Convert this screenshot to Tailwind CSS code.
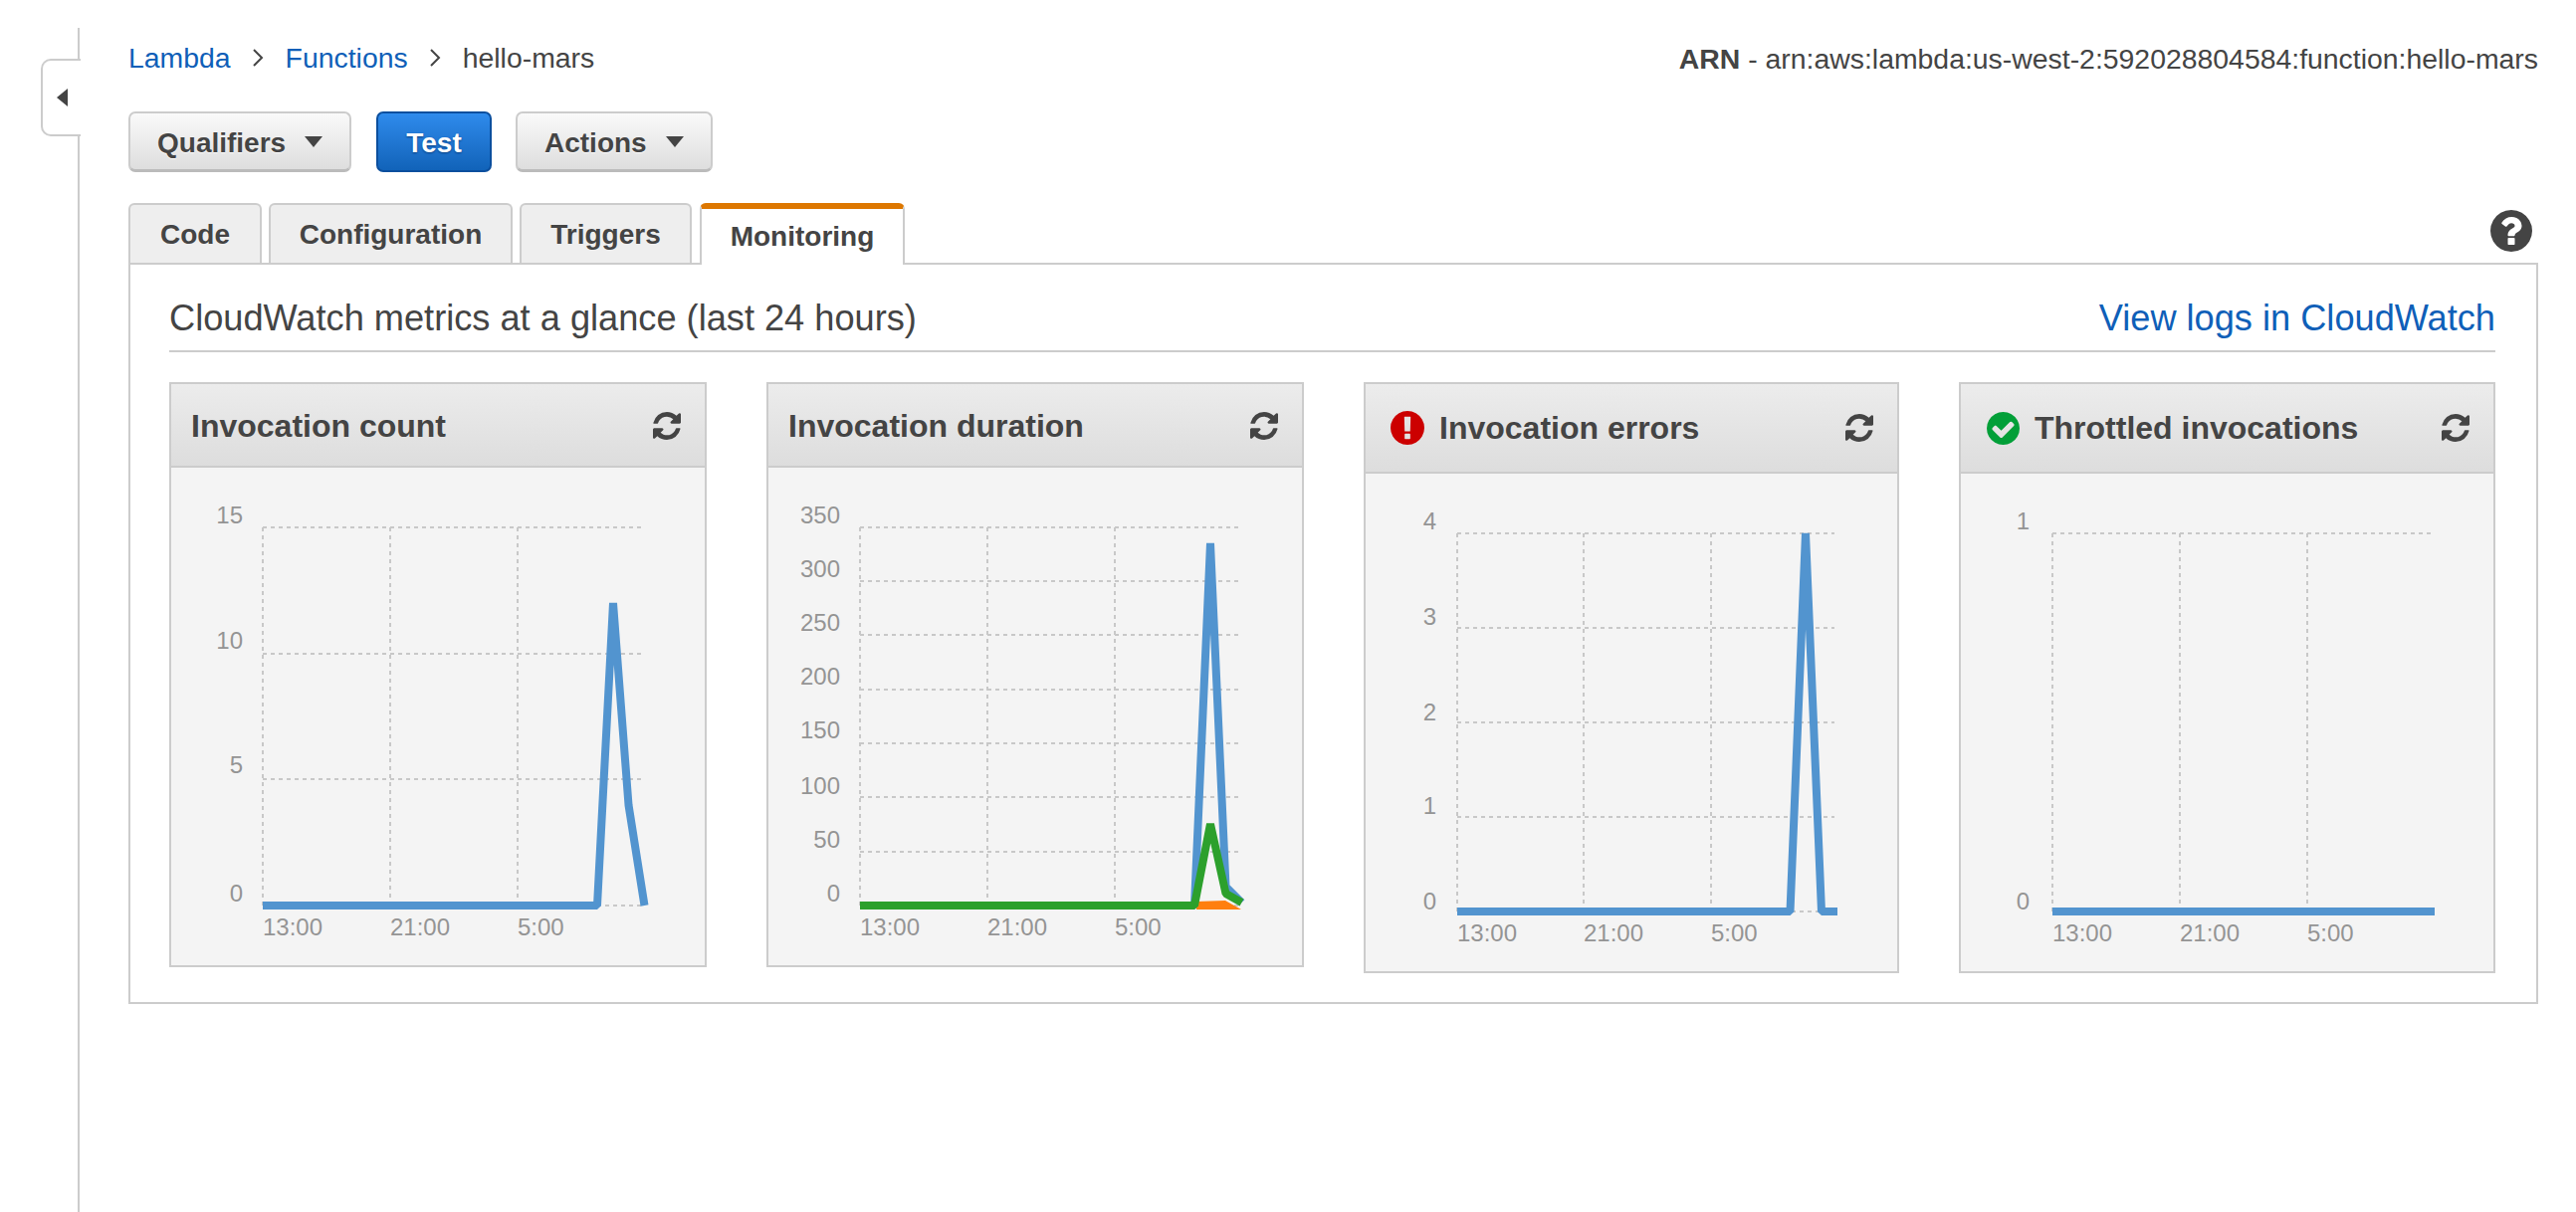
<!DOCTYPE html>
<html lang="en">
<head>
  <meta charset="UTF-8" />
  <title>hello-mars - Lambda</title>
  <script src="https://cdn.jsdelivr.net/npm/@tailwindcss/browser@4"></script>
</head>
<body class="bg-white text-[#444] font-['Liberation_Sans',Arial,sans-serif] min-h-screen flex">
  <!-- Sidebar rail with collapse toggle -->
  <aside class="relative w-[80px] shrink-0 mt-[28px] border-r-2 border-[#ccc]">
    <button class="absolute left-[41px] top-[31px] w-[40px] h-[78px] bg-white border-2 border-r-0 border-[#ccc] rounded-l-[10px] flex items-center pl-[14px]">
      <svg width="11" height="18" viewBox="0 0 11 18"><path d="M11 0v18L0 9z" fill="#444"/></svg>
    </button>
  </aside>

  <main class="flex-1 ml-[49px] mr-[38px] pt-[40px]">
    <!-- Breadcrumb and ARN -->
    <div class="flex items-center justify-between h-[36px] text-[28.4px]">
      <nav class="flex items-center">
        <a class="text-[#0f5fb8]">Lambda</a>
        <svg class="mx-[21.5px]" width="12" height="20" viewBox="0 0 12 20"><path d="M2 2l8 8-8 8" fill="none" stroke="#444" stroke-width="2"/></svg>
        <a class="text-[#0f5fb8]">Functions</a>
        <svg class="mx-[21.5px]" width="12" height="20" viewBox="0 0 12 20"><path d="M2 2l8 8-8 8" fill="none" stroke="#444" stroke-width="2"/></svg>
        <span>hello-mars</span>
      </nav>
      <div class="mt-[2px]"><b>ARN</b> - arn:aws:lambda:us-west-2:592028804584:function:hello-mars</div>
    </div>

    <!-- Action buttons -->
    <div class="flex gap-[25px] mt-[36px] text-[28px] font-bold">
      <button class="w-[224px] h-[61px] pl-[27px] pt-[3px] flex items-center rounded-[7px] border-2 border-[#ccc] border-b-[3px] border-b-[#bbb] bg-gradient-to-b from-[#fafafa] to-[#dedede] [text-shadow:0_1px_0_#fff]">
        Qualifiers
        <svg class="ml-[19px] -mt-[2px]" width="18" height="11" viewBox="0 0 18 11"><path d="M0 0h18L9 11z" fill="#444"/></svg>
      </button>
      <button class="w-[116px] h-[61px] pt-[2px] flex items-center justify-center rounded-[7px] border-2 border-[#0b4f9e] bg-gradient-to-b from-[#2f8bec] to-[#1163b9] text-white [text-shadow:0_1px_2px_#0a3f80]">Test</button>
      <button class="w-[198px] h-[61px] -ml-[1px] pl-[27px] pt-[3px] flex items-center rounded-[7px] border-2 border-[#ccc] border-b-[3px] border-b-[#bbb] bg-gradient-to-b from-[#fafafa] to-[#dedede] [text-shadow:0_1px_0_#fff]">
        Actions
        <svg class="ml-[19px] -mt-[2px]" width="18" height="11" viewBox="0 0 18 11"><path d="M0 0h18L9 11z" fill="#444"/></svg>
      </button>
    </div>

    <!-- Tabs -->
    <div class="flex items-start justify-between mt-[31px] -mb-[2px] relative">
      <div class="flex gap-[7px] text-[28px] font-bold">
        <div class="w-[134px] h-[60px] pt-[2px] flex items-center justify-center bg-[#eee] border-2 border-b-0 border-[#ccc] rounded-t-[6px]">Code</div>
        <div class="w-[245px] h-[60px] pt-[2px] flex items-center justify-center bg-[#eee] border-2 border-b-0 border-[#ccc] rounded-t-[6px]">Configuration</div>
        <div class="w-[173px] h-[60px] pt-[2px] flex items-center justify-center bg-[#eee] border-2 border-b-0 border-[#ccc] rounded-t-[6px]">Triggers</div>
        <div class="relative z-10 ml-[1px] w-[206px] h-[62px] flex items-center justify-center bg-white border-2 border-t-[6px] border-b-0 border-[#ccc] border-t-[#dd7700] rounded-t-[6px]">Monitoring</div>
      </div>
      <svg class="mt-[7px] mr-[6px]" width="42" height="42" viewBox="128 128 1536 1536"><path fill="#444" d="M1024 1376v-192q0-14-9-23t-23-9h-192q-14 0-23 9t-9 23v192q0 14 9 23t23 9h192q14 0 23-9t9-23zm256-672q0-88-55.5-163t-138.5-116-170-41q-243 0-371 213-15 24 8 42l132 100q7 6 19 6 16 0 25-12 53-68 86-92 34-24 86-24 48 0 85.5 26t37.5 59q0 38-20 61t-68 45q-63 28-115.5 86.5t-52.5 125.5v36q0 14 9 23t23 9h192q14 0 23-9t9-23q0-19 21.5-49.5t54.5-49.5q32-18 49-28.5t46-35 44.5-48 28-60.5 12.5-81zm384 192q0 209-103 385.5t-279.5 279.5-385.5 103-385.5-103-279.5-279.5-103-385.5 103-385.5 279.5-279.5 385.5-103 385.5 103 279.5 279.5 103 385.5z"/></svg>
    </div>

    <!-- Monitoring panel -->
    <section class="border-2 border-[#ccc] pl-[39px] pr-[41px] pb-[29px]">
      <div class="flex items-center justify-between pt-[32px] pb-[10px] border-b-2 border-[#ccc] text-[36.2px] leading-[44px]">
        <h2>CloudWatch metrics at a glance (last 24 hours)</h2>
        <a class="text-[#0f5fb8]">View logs in CloudWatch</a>
      </div>

      <div class="flex items-start justify-between mt-[30px]">
        <!-- Invocation count -->
        <div class="w-[540px] border-2 border-[#ccc] bg-[#f4f4f4]">
          <div class="h-[84px] pl-[20px] pr-[24px] flex items-center justify-between border-b-2 border-[#ccc] bg-gradient-to-b from-[#ececec] to-[#ddd]">
            <h3 class="text-[32px] font-bold pt-[2px]">Invocation count</h3>
            <svg class="mt-[1px]" width="28" height="28" viewBox="128 128 1536 1536"><path fill="#444" d="M1639 1056q0 5-1 7-64 268-268 434.5t-478 166.5q-146 0-282.5-55t-243.5-157l-129 129q-19 19-45 19t-45-19-19-45v-448q0-26 19-45t45-19h448q26 0 45 19t19 45-19 45l-137 137q71 66 161 102t187 36q134 0 250-65t186-179q11-17 53-117 8-23 30-23h192q13 0 22.5 9.5t9.5 22.5zm25-800v448q0 26-19 45t-45 19h-448q-26 0-45-19t-19-45 19-45l138-138q-148-137-349-137-134 0-250 65t-186 179q-11 17-53 117-8 23-30 23h-199q-13 0-22.5-9.5t-9.5-22.5v-7q65-268 270-434.5t480-166.5q146 0 284 55.5t245 156.5l130-129q19-19 45-19t45 19 19 45z"/></svg>
          </div>
          <svg class="block w-full h-[500px]">
            <g stroke="#c8c8c8" stroke-width="2" stroke-dasharray="4 4" fill="none">
              <path d="M92 60H473M92 187H473M92 313H473M92 440H473M92 60V440M220 60V440M348 60V440"/>
            </g>
            <g class="text-[24px]" fill="#949494" text-anchor="end">
              <text x="72" y="56">15</text><text x="72" y="182">10</text><text x="72" y="307">5</text><text x="72" y="436">0</text>
            </g>
            <g class="text-[24px]" fill="#949494">
              <text x="92" y="470">13:00</text><text x="220" y="470">21:00</text><text x="348" y="470">5:00</text>
            </g>
            <polyline points="92,440 428,440 444,136 459.5,339 475.5,440" fill="none" stroke="#5294cf" stroke-width="8" stroke-linejoin="bevel"/>
          </svg>
        </div>

        <!-- Invocation duration -->
        <div class="w-[540px] border-2 border-[#ccc] bg-[#f4f4f4]">
          <div class="h-[84px] pl-[20px] pr-[24px] flex items-center justify-between border-b-2 border-[#ccc] bg-gradient-to-b from-[#ececec] to-[#ddd]">
            <h3 class="text-[32px] font-bold pt-[2px]">Invocation duration</h3>
            <svg class="mt-[1px]" width="28" height="28" viewBox="128 128 1536 1536"><path fill="#444" d="M1639 1056q0 5-1 7-64 268-268 434.5t-478 166.5q-146 0-282.5-55t-243.5-157l-129 129q-19 19-45 19t-45-19-19-45v-448q0-26 19-45t45-19h448q26 0 45 19t19 45-19 45l-137 137q71 66 161 102t187 36q134 0 250-65t186-179q11-17 53-117 8-23 30-23h192q13 0 22.5 9.5t9.5 22.5zm25-800v448q0 26-19 45t-45 19h-448q-26 0-45-19t-19-45 19-45l138-138q-148-137-349-137-134 0-250 65t-186 179q-11 17-53 117-8 23-30 23h-199q-13 0-22.5-9.5t-9.5-22.5v-7q65-268 270-434.5t480-166.5q146 0 284 55.5t245 156.5l130-129q19-19 45-19t45 19 19 45z"/></svg>
          </div>
          <svg class="block w-full h-[500px]">
            <g stroke="#c8c8c8" stroke-width="2" stroke-dasharray="4 4" fill="none">
              <path d="M92 60H473M92 114H473M92 168H473M92 223H473M92 277H473M92 331H473M92 386H473M92 440H473M92 60V440M220 60V440M348 60V440"/>
            </g>
            <g class="text-[24px]" fill="#949494" text-anchor="end">
              <text x="72" y="56">350</text><text x="72" y="110">300</text><text x="72" y="164">250</text><text x="72" y="218">200</text><text x="72" y="272">150</text><text x="72" y="328">100</text><text x="72" y="382">50</text><text x="72" y="436">0</text>
            </g>
            <g class="text-[24px]" fill="#949494">
              <text x="92" y="470">13:00</text><text x="220" y="470">21:00</text><text x="348" y="470">5:00</text>
            </g>
            <polyline points="92,440 428,440 444,76 459.5,421 475.5,437" fill="none" stroke="#5294cf" stroke-width="8" stroke-linejoin="bevel"/>
            <polygon points="430,436 459,435 475,444 430,444" fill="#ff7f0e"/>
            <polyline points="92,440 428,440 444,358 459.5,428 475.5,437" fill="none" stroke="#2ca02c" stroke-width="8" stroke-linejoin="bevel"/>
          </svg>
        </div>

        <!-- Invocation errors -->
        <div class="w-[538px] border-2 border-[#ccc] bg-[#f4f4f4]">
          <div class="h-[90px] pl-[25px] pr-[24px] flex items-center justify-between border-b-2 border-[#ccc] bg-gradient-to-b from-[#ececec] to-[#ddd]">
            <div class="flex items-center gap-[15px]">
              <svg width="34" height="34" viewBox="128 128 1536 1536"><path fill="#cc0000" d="M896 128q209 0 385.5 103t279.5 279.5 103 385.5-103 385.5-279.5 279.5-385.5 103-385.5-103-279.5-279.5-103-385.5 103-385.5 279.5-279.5 385.5-103zm128 1247v-190q0-14-9-23.5t-22-9.5h-192q-13 0-23 10t-10 23v190q0 13 10 23t23 10h192q13 0 22-9.5t9-23.5zm-2-344l18-621q0-12-10-18-10-8-24-8h-220q-14 0-24 8-10 6-10 18l17 621q0 10 10 17.5t24 7.5h185q14 0 23.5-7.5t10.5-17.5z"/></svg>
              <h3 class="text-[32px] font-bold">Invocation errors</h3>
            </div>
            <svg width="28" height="28" viewBox="128 128 1536 1536"><path fill="#444" d="M1639 1056q0 5-1 7-64 268-268 434.5t-478 166.5q-146 0-282.5-55t-243.5-157l-129 129q-19 19-45 19t-45-19-19-45v-448q0-26 19-45t45-19h448q26 0 45 19t19 45-19 45l-137 137q71 66 161 102t187 36q134 0 250-65t186-179q11-17 53-117 8-23 30-23h192q13 0 22.5 9.5t9.5 22.5zm25-800v448q0 26-19 45t-45 19h-448q-26 0-45-19t-19-45 19-45l138-138q-148-137-349-137-134 0-250 65t-186 179q-11 17-53 117-8 23-30 23h-199q-13 0-22.5-9.5t-9.5-22.5v-7q65-268 270-434.5t480-166.5q146 0 284 55.5t245 156.5l130-129q19-19 45-19t45 19 19 45z"/></svg>
          </div>
          <svg class="block w-full h-[500px]">
            <g stroke="#c8c8c8" stroke-width="2" stroke-dasharray="4 4" fill="none">
              <path d="M92 60H471M92 155H471M92 250H471M92 345H471M92 440H471M92 60V440M219 60V440M347 60V440"/>
            </g>
            <g class="text-[24px]" fill="#949494" text-anchor="end">
              <text x="71" y="56">4</text><text x="71" y="152">3</text><text x="71" y="248">2</text><text x="71" y="342">1</text><text x="71" y="438">0</text>
            </g>
            <g class="text-[24px]" fill="#949494">
              <text x="92" y="470">13:00</text><text x="219" y="470">21:00</text><text x="347" y="470">5:00</text>
            </g>
            <polyline points="92,440 426.5,440 442,60 458,440 474,440" fill="none" stroke="#5294cf" stroke-width="8" stroke-linejoin="bevel"/>
          </svg>
        </div>

        <!-- Throttled invocations -->
        <div class="w-[539px] border-2 border-[#ccc] bg-[#f4f4f4]">
          <div class="h-[90px] pl-[26px] pr-[24px] flex items-center justify-between border-b-2 border-[#ccc] bg-gradient-to-b from-[#ececec] to-[#ddd]">
            <div class="flex items-center gap-[15px]">
              <svg width="33" height="33" viewBox="128 128 1536 1536"><path fill="#029f38" d="M1412 734q0-28-18-46l-91-90q-19-19-45-19t-45 19l-408 407-226-226q-19-19-45-19t-45 19l-91 90q-18 18-18 46 0 27 18 45l362 362q19 19 45 19 27 0 46-19l543-543q18-18 18-45zm252 162q0 209-103 385.5t-279.5 279.5-385.5 103-385.5-103-279.5-279.5-103-385.5 103-385.5 279.5-279.5 385.5-103 385.5 103 279.5 279.5 103 385.5z"/></svg>
              <h3 class="text-[32px] font-bold">Throttled invocations</h3>
            </div>
            <svg width="28" height="28" viewBox="128 128 1536 1536"><path fill="#444" d="M1639 1056q0 5-1 7-64 268-268 434.5t-478 166.5q-146 0-282.5-55t-243.5-157l-129 129q-19 19-45 19t-45-19-19-45v-448q0-26 19-45t45-19h448q26 0 45 19t19 45-19 45l-137 137q71 66 161 102t187 36q134 0 250-65t186-179q11-17 53-117 8-23 30-23h192q13 0 22.5 9.5t9.5 22.5zm25-800v448q0 26-19 45t-45 19h-448q-26 0-45-19t-19-45 19-45l138-138q-148-137-349-137-134 0-250 65t-186 179q-11 17-53 117-8 23-30 23h-199q-13 0-22.5-9.5t-9.5-22.5v-7q65-268 270-434.5t480-166.5q146 0 284 55.5t245 156.5l130-129q19-19 45-19t45 19 19 45z"/></svg>
          </div>
          <svg class="block w-full h-[500px]">
            <g stroke="#c8c8c8" stroke-width="2" stroke-dasharray="4 4" fill="none">
              <path d="M92 60H473M92 60V440M220 60V440M348 60V440"/>
            </g>
            <g class="text-[24px]" fill="#949494" text-anchor="end">
              <text x="69" y="56">1</text><text x="69" y="438">0</text>
            </g>
            <g class="text-[24px]" fill="#949494">
              <text x="92" y="470">13:00</text><text x="220" y="470">21:00</text><text x="348" y="470">5:00</text>
            </g>
            <polyline points="92,440 476,440" fill="none" stroke="#5294cf" stroke-width="8"/>
          </svg>
        </div>
      </div>
    </section>
  </main>
</body>
</html>
